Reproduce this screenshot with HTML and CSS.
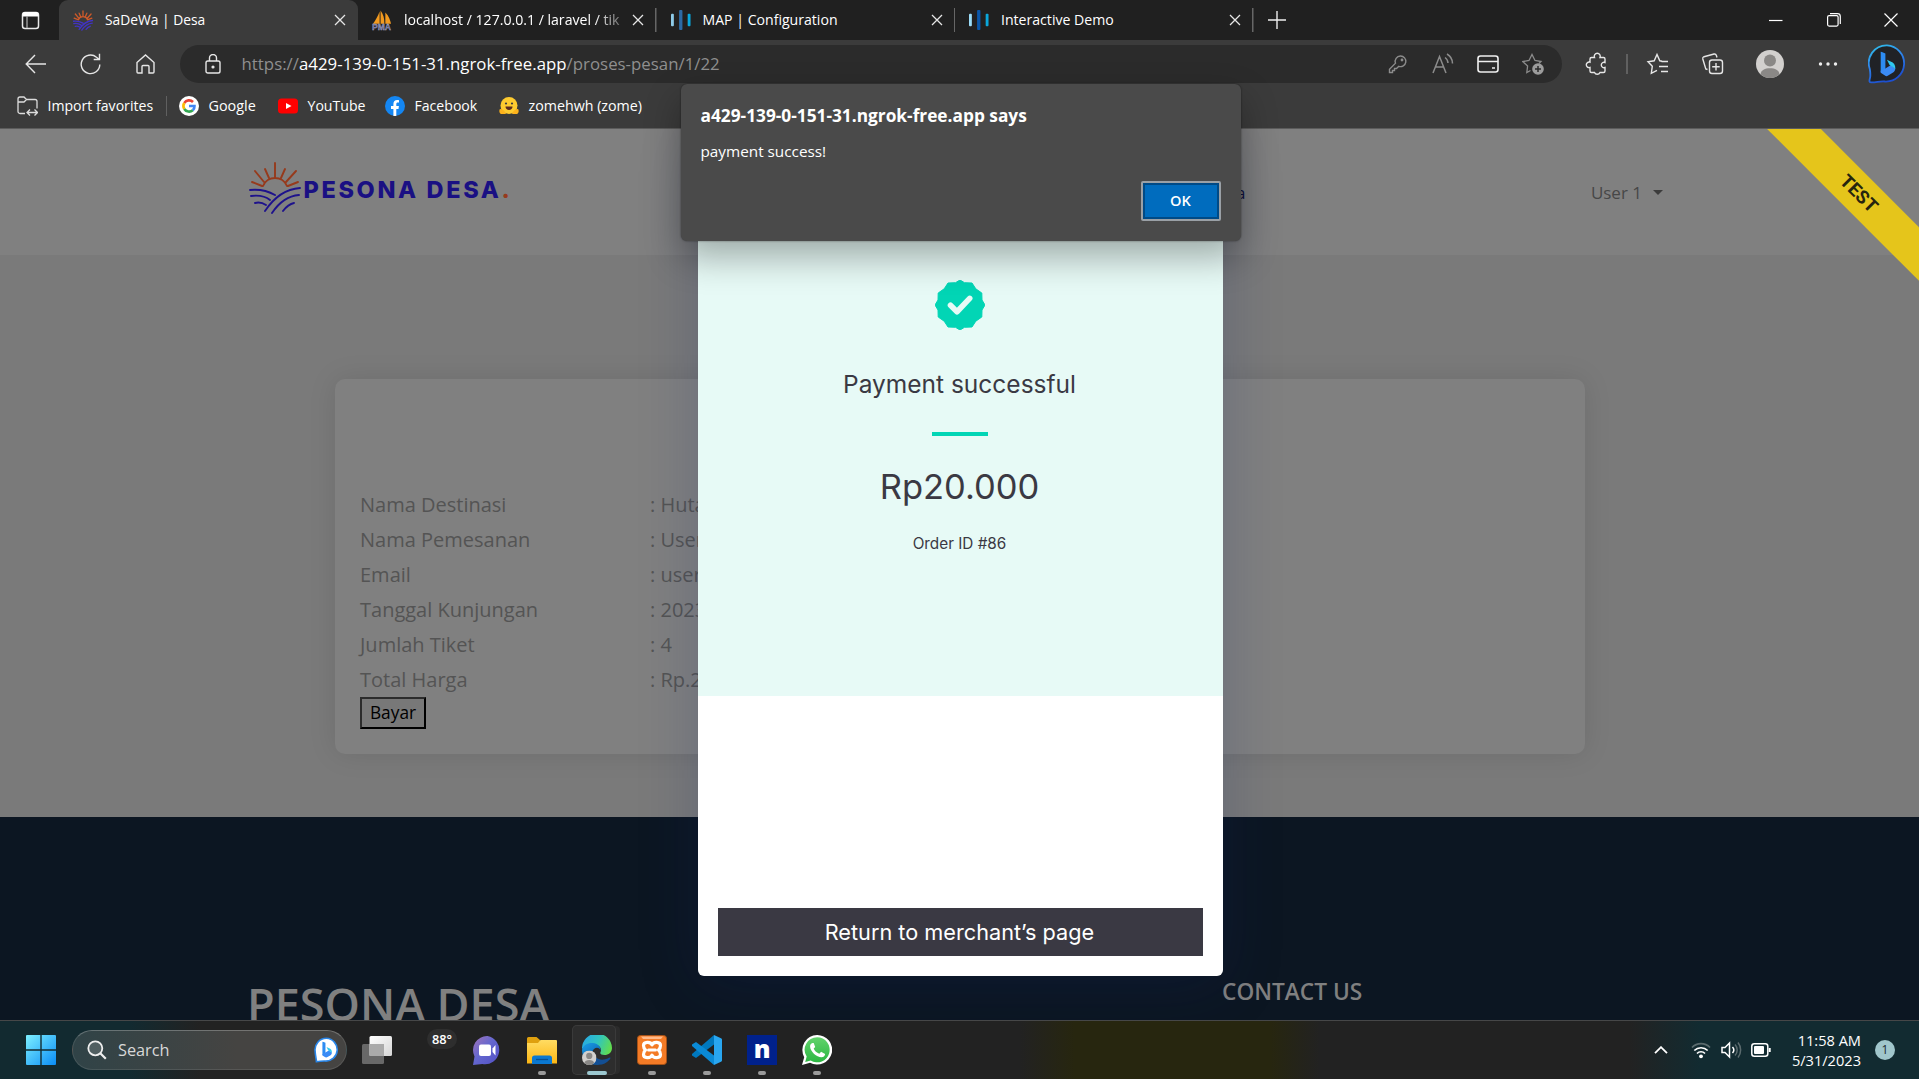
FILE: index.html
```html
<!DOCTYPE html>
<html lang="id">
<head>
<meta charset="utf-8">
<title>SaDeWa | Desa</title>
<link rel="stylesheet" href="styles.css">
</head>
<body>
<svg class="defs" aria-hidden="true">
  <defs>
    <linearGradient id="ringGrad" x1="0" y1="0" x2="0.4" y2="1"><stop offset="0" stop-color="#2fc4ea"/><stop offset=".5" stop-color="#2f86ea"/><stop offset="1" stop-color="#1d4fd0"/></linearGradient>
    <linearGradient id="winGrad" x1="0" y1="0" x2="1" y2="1"><stop offset="0" stop-color="#7df0ff"/><stop offset="1" stop-color="#0a8cf5"/></linearGradient>
    <linearGradient id="viewGrad" x1="0" y1="0" x2="1" y2="1"><stop offset="0" stop-color="#fff"/><stop offset="1" stop-color="#d6d6d6"/></linearGradient>
    <linearGradient id="chatGrad" x1="0" y1="0" x2="1" y2="1"><stop offset="0" stop-color="#a273b8"/><stop offset=".45" stop-color="#6467cf"/><stop offset="1" stop-color="#5250c4"/></linearGradient>
    <linearGradient id="folderGrad" x1="0" y1="0" x2="0" y2="1"><stop offset="0" stop-color="#ffdc62"/><stop offset="1" stop-color="#fcb614"/></linearGradient>
    <linearGradient id="edgeTop" x1="0" y1="0.3" x2="1" y2="0.6"><stop offset="0" stop-color="#28a8e4"/><stop offset=".5" stop-color="#30c4c0"/><stop offset="1" stop-color="#62dd4c"/></linearGradient>
    <linearGradient id="edgeSide" x1="0" y1="0" x2="0.6" y2="1"><stop offset="0" stop-color="#1a9ee6"/><stop offset="1" stop-color="#0a5cae"/></linearGradient>
    <linearGradient id="waGrad" x1="0" y1="0" x2="0" y2="1"><stop offset="0" stop-color="#62d36c"/><stop offset="1" stop-color="#2cb742"/></linearGradient>
    <symbol id="close" viewBox="0 0 12 12"><path d="M1 1l10 10M11 1L1 11" fill="none" stroke="currentColor" stroke-width="1.3"/></symbol>
    <symbol id="sun" viewBox="0 0 52 52">
      <g fill="none" class="sun-lines" stroke-linecap="round">
        <path stroke="var(--ray)" d="M14 24c2-5 7-8 12-8s10 3 12 8M26 15V1M20 16l-4-9M32 16l4-9M15 20L6 9M37 20L47 9M13 24L3 20M39 24l10-4"/>
        <path stroke="var(--field)" d="M1 28c10-1 18 1 25 5M2 34c8-1 14 0 19 4M6 41c4-1 8 0 11 2M16 49C24 37 36 27 51 26M23 51C29 42 38 34 50 33M34 49c3-4 6-7 11-8"/>
      </g>
    </symbol>
    <symbol id="bars" viewBox="0 0 21 22"><rect x="0" y="4" width="3" height="13" rx="1" fill="var(--bar1)"/><rect x="8.500" y="0" width="3.500" height="21" rx="1" fill="var(--bar2)"/><rect x="17.500" y="4" width="3" height="13" rx="1" fill="#0aa7dc"/></symbol>
    <symbol id="person" viewBox="0 0 28 28"><circle cx="14" cy="14" r="14" fill="#d2d0ce"/><circle cx="14" cy="10.500" r="6" fill="#8a8886"/><path d="M4.500 24.300C5 20 9 18.300 14 18.300s9 1.700 9.500 6A14 14 0 0 1 4.500 24.300z" fill="#8a8886"/></symbol>
    <symbol id="bingB" viewBox="0 0 14 24"><path d="M0 0l4.500 1.800V17L0 20z" fill="#2d8cf2"/><path d="M0 18.500l4.500-2.200 5-3L14 16c0 2-1 3.500-2.500 4.500L5.500 24 0 20.500z" fill="#3b8bf5"/><path d="M6 8l5.500 2.600C13.500 12 14 14 14 16.500L8.500 13z" fill="#2fc8ee"/></symbol>
  </defs>
</svg>

<header class="browser">
  <div class="tabstrip">
    <div class="tab-actions"><svg width="19" height="19" viewBox="0 0 19 19"><rect x="1.500" y="1.500" width="16" height="16" rx="2.500" fill="none" stroke="#e8e8e8" stroke-width="1.500"/><path d="M1.500 4a2.500 2.500 0 0 1 2.500-3h11a2.500 2.500 0 0 1 2.500 3v1.500h-16z" fill="#fff"/><path d="M6 5v12" stroke="#aaa" stroke-width="1.300"/></svg></div>
    <div class="tab tab-active"><svg class="fav fav-sun"><use href="#sun"/></svg><span class="tab-title t1">SaDeWa | Desa</span><svg class="x"><use href="#close"/></svg></div>
    <div class="tab"><svg class="fav" viewBox="0 0 21 21"><path d="M1 14C4 10 6 6 8 1v13zM9 14V0c3 4 4 8 4 14zM14 14V2c4 4 5 8 6 12z" fill="#f29a1f"/><text x="0" y="21" class="pma">PMA</text></svg><span class="tab-title t2">localhost / 127.0.0.1 / laravel / tik</span><svg class="x"><use href="#close"/></svg></div>
    <div class="tab"><svg class="fav bars-dim"><use href="#bars"/></svg><span class="tab-title t3">MAP | Configuration</span><svg class="x"><use href="#close"/></svg></div>
    <div class="tab"><svg class="fav bars-lit"><use href="#bars"/></svg><span class="tab-title t3">Interactive Demo</span><svg class="x"><use href="#close"/></svg></div>
    <svg class="newtab" width="18" height="18"><path d="M9 0v18M0 9h18" stroke="#eee" stroke-width="1.400"/></svg>
    <div class="win-buttons">
      <svg width="14" height="14"><path d="M0 7.500h13.500" stroke="#fff" stroke-width="1.200"/></svg>
      <svg width="14" height="14" fill="none" stroke="#fff" stroke-width="1.200"><rect x=".6" y="2.600" width="10.500" height="10.500" rx="1.500"/><path d="M3 .7h7.500a2.800 2.800 0 0 1 2.800 2.800V11"/></svg>
      <svg width="14" height="14"><path d="M.5.5l13 13M13.500.5l-13 13" stroke="#fff" stroke-width="1.200"/></svg>
    </div>
  </div>

  <div class="toolbar">
    <div class="nav-icons">
      <svg width="21" height="20" viewBox="0 0 21 20"><path d="M21 10H1.500M10 1L1.200 10l8.800 9"/></svg>
      <svg width="21" height="22" viewBox="0 0 21 22"><path d="M19.800 11.500A9.300 9.300 0 1 1 16.500 4.200l2.500 2M19.500 0.800v5.700h-5.800"/></svg>
      <svg width="19" height="20" viewBox="0 0 19 20"><path d="M1 8.500L9.500 1 18 8.500V18a1 1 0 0 1-1 1h-4v-6.500a1 1 0 0 0-1-1H7a1 1 0 0 0-1 1V19H2a1 1 0 0 1-1-1z"/></svg>
    </div>
    <div class="address">
      <svg class="lock" width="16" height="20" viewBox="0 0 16 20"><rect x="1" y="7" width="14" height="12" rx="1.800"/><path d="M4.500 7V4a3.500 3.500 0 0 1 7 0v3"/><circle cx="8" cy="13" r=".9" fill="#e6e6e6"/></svg>
      <div class="url"><span class="scheme">https://</span><span class="host">a429-139-0-151-31.ngrok-free.app</span><span class="path">/proses-pesan/1/22</span></div>
      <div class="address-icons">
        <svg viewBox="0 0 22 22"><g stroke="#8c8c8c"><path d="M13.500 3a5.300 5.300 0 1 1-1.700 10.300L9.500 15.500H7.500v2H5.500v2H2.500v-3.300l6-6A5.300 5.300 0 0 1 13.500 3z"/><circle cx="15" cy="7" r=".7"/></g></svg>
        <svg viewBox="0 0 22 22"><g stroke="#8c8c8c" stroke-width="1.500"><path d="M1 20L7.500 3.500 14 20M3.500 14h8M13 4.500a7 7 0 0 1 3 5.500M15 1a11 11 0 0 1 5.500 9.500"/></g></svg>
        <svg viewBox="0 0 22 22"><g stroke="#f0f0f0" stroke-width="1.600"><rect x="1" y="3" width="20" height="16" rx="2.500"/><path d="M1 8.500h20M15 15h3"/></g></svg>
        <svg viewBox="0 0 22 22"><path stroke="#8c8c8c" stroke-width="1.300" d="M8.500 17.500L4.800 19.500l.8-6.500L.8 8.500l6.200-1L10 1.500l3 6 6 1-2 2"/><circle cx="16" cy="16" r="5.800" fill="#9c9c9c" stroke="none"/><path stroke="#2b2b2b" stroke-width="1.500" d="M16 13v6M13 16h6"/></svg>
      </div>
    </div>
    <div class="ext-icons">
      <svg class="puzzle" width="28" height="28" viewBox="0 0 28 28"><path d="M7 9a1.500 1.500 0 0 1 1.500-1.500h3a3 3 0 1 1 5.500 0h3.500A1.500 1.500 0 0 1 22 9v3.500a2.700 2.700 0 1 0 0 5V21a1.500 1.500 0 0 1-1.500 1.500H17a3 3 0 0 1-5.500 0h-3A1.500 1.500 0 0 1 7 21v-3.500a2.800 2.800 0 1 1 0-5.300z"/></svg>
      <span class="tb-sep"></span>
      <svg class="starlist" width="28" height="28" viewBox="0 0 28 28"><path d="M18 11.300L15.800 10.800 13 4.500l-2.800 6.300-6.200.9 4.300 4.600-1 7 5.700-3M17.500 11.500H24M15 16.500h9M17 21.500h7"/></svg>
      <svg class="collections" width="28" height="28" viewBox="0 0 28 28"><path d="M8.500 19.500L6.800 19 3.800 9A2 2 0 0 1 5 6.700L15 4a2 2 0 0 1 2.300 1.300L18 7.500"/><rect x="10.500" y="10" width="13" height="13.500" rx="2.500"/><path d="M17 13v7.500M13.200 16.800h7.500"/></svg>
      <svg class="avatar" width="28" height="28"><use href="#person" stroke="none"/></svg>
      <svg class="dots" width="28" height="28"><g fill="#eee" stroke="none"><circle cx="6.500" cy="14" r="1.700"/><circle cx="14" cy="14" r="1.700"/><circle cx="21.500" cy="14" r="1.700"/></g></svg>
      <svg class="bing" width="38" height="40" viewBox="0 0 38 40"><path d="M19 1.300A17.800 17.800 0 1 1 17 37.500c-4-.6-9 1-13.500.9C.8 38.300 1.300 37 2 34c.7-3 .3-6-.2-9A17.800 17.800 0 0 1 19 1.300z" fill="#202226" stroke="url(#ringGrad)" stroke-width="1.800"/><use href="#bingB" x="12" y="7.500" width="16" height="25" stroke="none"/></svg>
    </div>
  </div>

  <nav class="bookmarks">
    <svg class="bm-import" width="21" height="20" viewBox="0 0 21 20"><path d="M8 17.500H3a2 2 0 0 1-2-2V3a2 2 0 0 1 2-2h4l2.500 2.500H18a2 2 0 0 1 2 2v7M1 6h6l2.500-2.500M10.500 16.500h9.500M13 13.500l-3 3 3 3M17.500 13.500l3 3-3 3" fill="none" stroke="#ddd" stroke-width="1.300"/></svg>
    <span class="bm-first">Import favorites</span>
    <span class="bm-sep"></span>
    <svg class="bm-icon" viewBox="0 0 20 20"><circle cx="10" cy="10" r="10" fill="#fff"/><g fill="none" stroke-width="2.600"><path d="M5.300 7A5.600 5.600 0 0 1 14 6" stroke="#ea4335"/><path d="M5.300 7a5.600 5.600 0 0 0 0 6" stroke="#fbbc05"/><path d="M5.300 13a5.600 5.600 0 0 0 8.500 1.200" stroke="#34a853"/><path d="M13.800 14.200A5.500 5.500 0 0 0 15.500 10H10" stroke="#4285f4"/></g></svg><span class="bm g">Google</span>
    <svg class="bm-icon" viewBox="0 0 20 20"><rect y="2.500" width="20" height="15" rx="3.500" fill="#f00"/><path d="M8 7l5.500 3L8 13z" fill="#fff"/></svg><span class="bm y">YouTube</span>
    <svg class="bm-icon" viewBox="0 0 20 20"><circle cx="10" cy="10" r="10" fill="#1486f2"/><path d="M8.400 20v-7H6v-3h2.400V8c0-2.600 1.500-4 3.700-4 1 0 1.900.2 1.900.2v2.400h-1.200c-1.100 0-1.500.7-1.500 1.500V10h2.600l-.4 3h-2.200v7z" fill="#fff"/></svg><span class="bm f">Facebook</span>
    <svg class="bm-icon" viewBox="0 0 20 20"><circle cx="10" cy="9.500" r="8.500" fill="#fecb2f"/><path d="M1 13c3 0 5 2 6 5H2c-2-1-2-4-1-5zM19 13c-3 0-5 2-6 5h5c2-1 2-4 1-5z" fill="#fdb31c"/><circle cx="7" cy="7.500" r="1.100" fill="#3a3b45"/><circle cx="13" cy="7.500" r="1.100" fill="#3a3b45"/><path d="M6.500 10.500h7c0 2-1.500 3.500-3.500 3.500s-3.500-1.500-3.500-3.500z" fill="#5a2b20"/></svg><span class="bm z">zomehwh (zome)</span>
  </nav>
</header>

<main class="page">
  <div class="site-header">
    <div class="logo"><svg width="52" height="52"><use href="#sun"/></svg><span class="logo-text">PESONA DESA<i>.</i></span></div>
    <div class="menu">a</div>
    <div class="user">User 1 <b class="caret"></b></div>
  </div>
  <section class="order">
    <div class="card">
      <dl class="details">
        <dt>Nama Destinasi</dt><dd>: Hutan</dd>
        <dt>Nama Pemesanan</dt><dd>: User 1</dd>
        <dt>Email</dt><dd>: user1</dd>
        <dt>Tanggal Kunjungan</dt><dd>: 2023</dd>
        <dt>Jumlah Tiket</dt><dd>: 4</dd>
        <dt>Total Harga</dt><dd>: Rp.20</dd>
      </dl>
      <button class="pay">Bayar</button>
    </div>
  </section>
  <footer class="site-footer"><h2>PESONA DESA</h2><h3>CONTACT US</h3></footer>

  <div class="ribbon"><span>TEST</span></div>

  <div class="modal">
    <div class="receipt">
      <svg class="badge" viewBox="-25 -25 50 50"><path d="M0-25L4.500-22.300 12-22 15.800-16.200 21.800-12 22-5 25 0 22 5 21.800 12 15.800 16.200 12 22 4.500 22.300 0 25-4.500 22.300-12 22-15.800 16.200-21.800 12-22 5-25 0-22-5-21.800-12-15.800-16.200-12-22-4.500-22.300z" fill="#02d5b5" stroke="#02d5b5" stroke-linejoin="round"/><path d="M-9.500.2l6.500 6.500L9.700-6.600" fill="none" stroke="#e7faf6" stroke-width="5.600" stroke-linecap="round" stroke-linejoin="round"/></svg>
      <div class="status">Payment successful</div>
      <div class="rule"></div>
      <div class="amount">Rp20.000</div>
      <div class="order-id">Order ID #86</div>
    </div>
    <div class="modal-foot"><button class="return">Return to merchant’s page</button></div>
  </div>
</main>

<div class="alert">
  <div class="alert-title">a429-139-0-151-31.ngrok-free.app says</div>
  <div class="alert-text">payment success!</div>
  <button class="ok">OK</button>
</div>

<footer class="taskbar">
  <svg class="start" width="30" height="30" viewBox="0 0 30 30"><path d="M0 1a1 1 0 0 1 1-1h13.300v14.300H0zM15.700 0H29a1 1 0 0 1 1 1v13.300H15.700zM0 15.700h14.300V30H1a1 1 0 0 1-1-1zM15.700 15.700H30V29a1 1 0 0 1-1 1H15.700z" fill="url(#winGrad)"/></svg>
  <div class="search">
    <svg width="20" height="20" viewBox="0 0 20 20"><circle cx="8.300" cy="8.300" r="7" fill="rgba(255,255,255,.15)" stroke="#eee" stroke-width="1.800"/><path d="M13.300 13.300l5.500 5.500" stroke="#eee" stroke-width="2.200"/></svg>
    <span>Search</span>
    <svg width="25" height="26" viewBox="0 0 38 40"><path d="M19 2A17.500 17.500 0 1 1 17 37c-4-.6-9 1-13.500.9 0-4-1.700-9-2-16A17.500 17.500 0 0 1 19 2z" fill="#fff" stroke="#2a86e8" stroke-width="2.500"/><use href="#bingB" x="12" y="7" width="16" height="25"/></svg>
  </div>
  <svg class="ic view" width="30" height="28"><rect x="0" y="8" width="22" height="20" rx="1.500" fill="#686868"/><rect x="7.500" y="0" width="22.500" height="20" rx="1.500" fill="url(#viewGrad)"/><rect x="7.500" y="8" width="14.500" height="12" fill="#aaa"/></svg>
  <div class="weather">88°</div>
  <svg class="ic chat" width="29" height="29" viewBox="0 0 29 29"><path d="M14.500 0A14.200 14.200 0 1 1 9.500 28L0 29l1.500-8.500A14.200 14.200 0 0 1 14.500 0z" fill="url(#chatGrad)"/><rect x="6" y="8.500" width="12" height="11.500" rx="2" fill="#fff"/><path d="M19.500 12.500l3-3.500v10.500l-3-3.500z" fill="#fff"/></svg>
  <div class="app first"><svg width="30" height="30" viewBox="0 0 30 30"><path d="M0 3.500A1.500 1.500 0 0 1 1.500 2h8L13 5v5H0z" fill="#dfa00f"/><path d="M0 8h11l2.500-3H29a1 1 0 0 1 1 1v22.500H0z" fill="url(#folderGrad)"/><path d="M5 29v-6a2.500 2.500 0 0 1 2.500-2.500h15A2.500 2.500 0 0 1 25 23v6z" fill="#0b78d0"/><path d="M9 24.500h12" stroke="#064f94" stroke-width="1.300"/></svg><i></i></div>
  <div class="app edge"><svg width="30" height="30" viewBox="0 0 30 30"><path d="M0 14A15 15 0 0 1 30 13c0 4.500-3.500 7-7.500 7-3 0-5-1.200-4-2.800 1.500-2.500 0-7.200-5.500-7.200C7 10 2 12 0 14z" fill="url(#edgeTop)"/><path d="M0 15C1 10 6 7.500 11 8c5 .5 8 4 7.500 7.500C18 13 14.500 11.500 12 14c-4 4-1.500 12 5 15.500C8 31 0 24.500 0 15z" fill="url(#edgeSide)"/><path d="M11 15c-1.500 6 5 10.500 11 9.500 3-.5 4.800-1.700 6-2 .8 0 .4 1-.3 2-3.500 4.500-9 6-13.200 5C8 27.500 8 19 11 15z" fill="#134f94"/><use href="#person" x="0" y="15.500" width="14.500" height="14.500"/></svg><i></i></div>
  <div class="app xampp"><svg width="30" height="30" viewBox="0 0 30 30"><rect x=".5" y=".5" width="29" height="29" rx="3" fill="#f47b26" stroke="#a65117"/><path d="M4 1.500h22l-2 2.500H6z" fill="#ffb98a"/><path d="M15 9.800C13.500 6.200 6.500 6.600 6.500 10.500c0 1.700.8 3.500 2 4.500-1.200 1-2 2.800-2 4.500 0 3.900 7 4.300 8.500.7 1.500 3.600 8.500 3.200 8.500-.7 0-1.700-.8-3.500-2-4.500 1.200-1 2-2.800 2-4.500 0-3.900-7-4.300-8.500-.7z" fill="none" stroke="#fff" stroke-width="3.200" stroke-linejoin="round"/><path d="M11.500 15h7" stroke="#fff" stroke-width="3" stroke-linecap="round"/></svg><i></i></div>
  <div class="app"><svg width="30" height="30" viewBox="0 0 30 30"><path d="M22 0v9.500L4 23 0 20.500V19z" fill="#0078be"/><path d="M4 7L0 9.500V11l22 19v-9.500z" fill="#0a8ad6"/><path d="M22 0l7 3.200a1.500 1.500 0 0 1 1 1.300v21a1.500 1.500 0 0 1-1 1.300L22 30z" fill="#29a6f0"/></svg><i></i></div>
  <div class="app"><svg width="30" height="30" viewBox="0 0 30 30"><rect width="30" height="30" fill="#00218c"/><text x="15" y="22.500" text-anchor="middle" class="nitro">n</text></svg><i></i></div>
  <div class="app"><svg width="30" height="30" viewBox="0 0 30 30"><path d="M15 0a15 14.800 0 1 1-7 27.800L0 30l2.200-7.800A15 15 0 0 1 15 0z" fill="#fff"/><path d="M15.200 2.300a12.500 12.500 0 1 1-6.500 23.200L3.200 26.900l1.500-5.300A12.500 12.500 0 0 1 15.200 2.300z" fill="url(#waGrad)"/><path d="M10.500 8c-1.500.3-2.600 2-2.400 3.700.5 5 6.500 10.500 11.400 10.600 1.800 0 3.600-1.300 3.600-3.300l-4-2.200-1.800 2c-2.500-.8-4.700-3-5.600-5.200l1.500-1.700L11.700 8z" fill="#fff"/></svg><i></i></div>
  <div class="tray">
    <svg class="chev" width="14" height="8"><path d="M1 7.200l6-6 6 6" fill="none" stroke="#fff" stroke-width="1.800"/></svg>
    <svg class="wifi" width="20" height="17" viewBox="0 0 20 17"><g fill="none" stroke="#fff" stroke-width="1.700"><path d="M1 5.500a12.500 12.500 0 0 1 18 0" stroke="#5b6b6e"/><path d="M3.300 8.500a9.500 9.500 0 0 1 13.400 0M6 11.500a5.500 5.500 0 0 1 8 0"/></g><circle cx="10" cy="14.300" r="1.900" fill="#fff"/></svg>
    <svg class="vol" width="21" height="18" viewBox="0 0 21 18"><g fill="none" stroke="#fff" stroke-width="1.500"><path d="M1 6.500h3L8.500 2v14L4 11.500H1z"/><path d="M11.500 6a4.500 4.500 0 0 1 0 6"/><path d="M14 3.500a8 8 0 0 1 0 11M17 1.500a12 12 0 0 1 0 15" stroke="#5b6b6e"/></g></svg>
    <svg class="bat" width="20" height="14" viewBox="0 0 20 14"><rect x=".8" y=".8" width="16" height="12.400" rx="2.500" fill="none" stroke="#fff" stroke-width="1.500"/><rect x="3" y="3" width="10" height="8" rx="1" fill="#fff"/><path d="M18.700 5v4" stroke="#fff" stroke-width="2"/></svg>
    <div class="clock"><span>11:58 AM</span><span>5/31/2023</span></div>
    <span class="notif">1</span>
  </div>
</footer>
</body>
</html>
```
FILE: styles.css
```css
* { box-sizing: border-box; }
body {
  margin: 0;
  width: 1919px;
  height: 1079px;
  overflow: hidden;
  display: flex;
  flex-direction: column;
  position: relative;
  font-family: "Open Sans", "Noto Sans", sans-serif;
  background: #202020;
}
svg { display: block; flex: none; }
button { font-family: inherit; margin: 0; }
.defs { position: absolute; width: 0; height: 0; }
.sun-lines { stroke-width: var(--line, 1.900px); }

/* browser chrome */
.browser { flex: none; height: 129px; background: #3b3b3b; border-bottom: 1px solid #5c5c5c; color: #fff; white-space: nowrap; }
.tabstrip { height: 40px; display: flex; align-items: center; background: #202020; }
.tab-actions { width: 59px; padding-left: 21px; }
.tab { width: 298.500px; height: 40px; padding: 0 12.500px 0 14px; display: flex; align-items: center; gap: 12px; background: linear-gradient(#666, #666) right center / 1.500px 24px no-repeat; }
.tab-active { width: 299px; background: #3b3b3b; border-radius: 9px 9px 0 0; }
.fav { width: 20px; height: 21px; overflow: visible; }
.fav-sun { --ray: #cf5a2a; --field: #4133c4; --line: 3.400px; }
.bars-dim { --bar1: #8ecbe8; --bar2: #2c6aa5; }
.bars-lit { --bar1: #9bdcf8; --bar2: #0a56a8; }
.pma { font: bold 9px "Liberation Sans", sans-serif; fill: #6a6c9e; stroke: #b9b9cf; stroke-width: .3px; }
.tab-title { flex: 1; overflow: hidden; padding-bottom: 2px; font-size: 14.100px; }
.t1 { font-size: 13.800px; }
.t2 { font-size: 14.100px; margin-right: -2px; -webkit-mask-image: linear-gradient(90deg, #000 190px, rgba(0,0,0,.25) 220px); mask-image: linear-gradient(90deg, #000 190px, rgba(0,0,0,.25) 220px); }
.x { width: 12px; height: 12px; color: #e6e6e6; }
.newtab { margin-left: 14px; }
.win-buttons { margin-left: auto; padding-right: 21px; display: flex; gap: 43.500px; }

.toolbar { height: 48px; display: flex; align-items: center; }
.nav-icons { width: 180px; padding-left: 24.500px; display: flex; align-items: center; gap: 34.500px; }
.nav-icons svg, .lock, .address-icons svg, .ext-icons svg { fill: none; stroke: #e6e6e6; stroke-width: 1.400px; }
.address { width: 1382px; height: 38px; border-radius: 19px; background: #2b2b2b; display: flex; align-items: center; padding: 0 18px 0 24.500px; }
.url { flex: 1; margin-left: 21px; padding-bottom: 2px; font-size: 16.800px; letter-spacing: .03px; color: #8f8f8f; }
.host { color: #fff; }
.address-icons { display: flex; gap: 23px; }
.address-icons svg { width: 22px; height: 22px; }
.ext-icons { display: flex; align-items: center; }
.puzzle { margin-left: 21px; }
.tb-sep { width: 2px; height: 20px; margin: 0 16px 0 15px; background: #606060; }
.collections { margin-left: 27px; }
.avatar { margin-left: 29px; }
.dots { margin-left: 30px; }
.bing { margin-left: 26px; }

.bookmarks { height: 35px; display: flex; align-items: center; padding-left: 17px; font-size: 14.100px; }
.bm-first { width: 119px; padding-left: 9.500px; }
.bm-sep { width: 1px; height: 20px; margin: 0 12px 0 9px; background: #606060; }
.bm-icon { width: 20px; height: 20px; }
.bm { padding-left: 9.500px; }
.g { width: 79px; font-size: 14.400px; }
.y { width: 87px; }
.f { width: 94px; }
.z { font-size: 14.250px; }

/* page under the dimmed backdrop */
.page { position: relative; flex: none; height: 891px; overflow: hidden; background: #7a7a7a; display: flex; flex-direction: column; }
.site-header { flex: none; height: 126px; background: #808080; display: flex; align-items: center; padding: 0 256px 0 249px; }
.logo { display: flex; align-items: center; gap: 2.500px; width: 982px; margin-top: -8px; --ray: #963a1c; --field: #1e128c; }
.logo-text { font-family: Inter, sans-serif; font-weight: 800; font-size: 23.500px; letter-spacing: 2.650px; color: #1a1083; margin-top: 2px; }
.logo-text i { font-style: normal; color: #963a1c; }
.menu { font-size: 17px; color: #10123c; width: 20px; padding-left: 5px; }
.user { margin-left: auto; display: flex; align-items: center; gap: 11px; font-size: 17px; color: #474747; }
.caret { border: 5px solid transparent; border-top-color: #3c3c3c; border-bottom: 0; }

.order { flex: none; height: 562px; padding: 124px 334px 0 335px; }
.card { height: 375px; border-radius: 10px; background: #808080; padding: 108px 25px 25px; box-shadow: 0 0 28px rgba(0, 0, 0, .1); }
.details { margin: 0; display: grid; grid-template-columns: 290px 1fr; font-size: 20px; line-height: 35px; color: #545454; }
.details dd { margin: 0; }
.pay { display: block; width: 66px; height: 32px; padding: 0; border: 2px solid #000; border-top-color: #2c2c2c; border-left-color: #2c2c2c; background: #787878; font-size: 17.300px; line-height: 26px; color: #000; }

.site-footer { flex: 1; background: #0c1622; padding: 160px 0 0 247px; display: flex; align-items: flex-start; color: #808080; white-space: nowrap; }
.site-footer h2 { margin: 0; width: 975px; font-size: 45px; line-height: 54px; font-weight: 600; }
.site-footer h3 { margin: 0; font-size: 22.700px; line-height: 30px; font-weight: 600; }

.ribbon { position: absolute; top: 45px; left: 1608px; width: 500px; height: 38px; background: #e5c51b; transform: rotate(45deg); display: flex; align-items: center; justify-content: center; }
.ribbon span { padding-left: 2px; font: 700 18.500px Roboto, sans-serif; color: #26240f; }

/* payment window */
.modal { position: absolute; left: 698px; top: 0; width: 525px; height: 847px; background: #fff; border-radius: 6px; overflow: hidden; display: flex; flex-direction: column; font-family: Inter, sans-serif; color: #3a3943; box-shadow: 0 8px 60px rgba(17, 38, 100, .22); }
.receipt { height: 567px; padding: 151px 2px 0 0; background: #e7faf6; display: flex; flex-direction: column; align-items: center; }
.badge { width: 50px; height: 50px; }
.status { margin-top: 39px; font-size: 24.500px; line-height: 30px; }
.rule { margin-top: 33px; width: 56px; height: 4px; background: #02d5b5; }
.amount { margin-top: 30px; font-size: 34.500px; line-height: 42px; }
.order-id { margin-top: 26px; font-size: 15.300px; line-height: 20px; }
.modal-foot { flex: 1; display: flex; align-items: flex-end; padding: 0 20px 20px; }
.return { width: 485px; height: 48px; padding: 0 2px 0 0; border: 0; background: #3a3943; color: #fff; font-size: 21.700px; }

/* javascript alert */
.alert { position: absolute; left: 681px; top: 84px; width: 560px; height: 157px; padding: 20px 20px 20px 19.500px; background: #4a4a4a; border-radius: 6px; box-shadow: 0 0 2px rgba(0,0,0,.5), 0 16px 36px rgba(0, 0, 0, .32); display: flex; flex-direction: column; color: #fff; white-space: nowrap; }
.alert-title { font-size: 17.300px; line-height: 24px; font-weight: 700; }
.alert-text { margin-top: 13px; font-size: 15.300px; line-height: 20px; }
.ok { margin-top: auto; align-self: flex-end; width: 80px; height: 40px; padding: 0 1px 2px 0; border: 2.500px solid #9aa0a6; border-radius: 2px; background: #006cbe; box-shadow: inset 0 0 0 2px #004a86; color: #fff; font-size: 14.600px; font-weight: 600; }

/* taskbar */
.taskbar { position: relative; flex: none; height: 59px; border-top: 1px solid #464748; display: flex; align-items: center; padding-left: 25.500px; color: #fff; background: linear-gradient(90deg, #122a30 0, #122a30 130px, #222 200px, #222 1020px, #27260f 1075px, #27260f 1270px, #222 1320px, #222 1630px, #122b31 1700px); }
.search { width: 275px; height: 40px; margin-left: 16.500px; padding: 0 7px 0 14px; border: 1px solid rgba(255,255,255,.1); border-top-color: rgba(255,255,255,.25); border-radius: 20px; background: linear-gradient(90deg, #304347, #454442 60%); display: flex; align-items: center; font-size: 16.300px; color: #d8d8d8; }
.search span { flex: 1; margin-left: 11px; }
.view { margin-left: 15px; }
.weather { align-self: flex-start; width: 30px; height: 20px; margin: 8px 0 0 35px; border-radius: 10px; background: #2e2e2e; font-size: 12.800px; line-height: 21px; font-weight: 600; text-align: center; }
.chat { margin-left: 16px; }
.app { position: relative; height: 50px; display: flex; align-items: center; margin-left: 25px; }
.app i { position: absolute; left: 11px; bottom: 0; width: 8px; height: 4px; border-radius: 2px; background: #9a9a9a; }
.edge { width: 44px; margin-left: 15px; padding-left: 10px; border-radius: 5px; background: #2d2d2d; box-shadow: inset 0 0 0 1px #3a3a3a, 5px 0 0 -1px #2b2b2b; }
.edge i { left: 15px; width: 20px; background: #9cc8d0; }
.xampp { margin-left: 21px; }
.first { margin-left: 25px; }
.nitro { font: 800 25px "Open Sans", sans-serif; fill: #fff; }
.tray { margin-left: auto; display: flex; align-items: center; padding-right: 24px; }
.wifi { margin-left: 23px; }
.vol { margin-left: 10px; }
.bat { margin-left: 9px; }
.clock { width: 90px; display: flex; flex-direction: column; align-items: flex-end; font-size: 14.600px; line-height: 20px; padding-bottom: 1px; }
.notif { width: 20px; height: 20px; margin-left: 14px; border-radius: 50%; background: #a0c6cb; color: #1d2c2f; font-size: 12px; line-height: 20px; text-align: center; }
```
